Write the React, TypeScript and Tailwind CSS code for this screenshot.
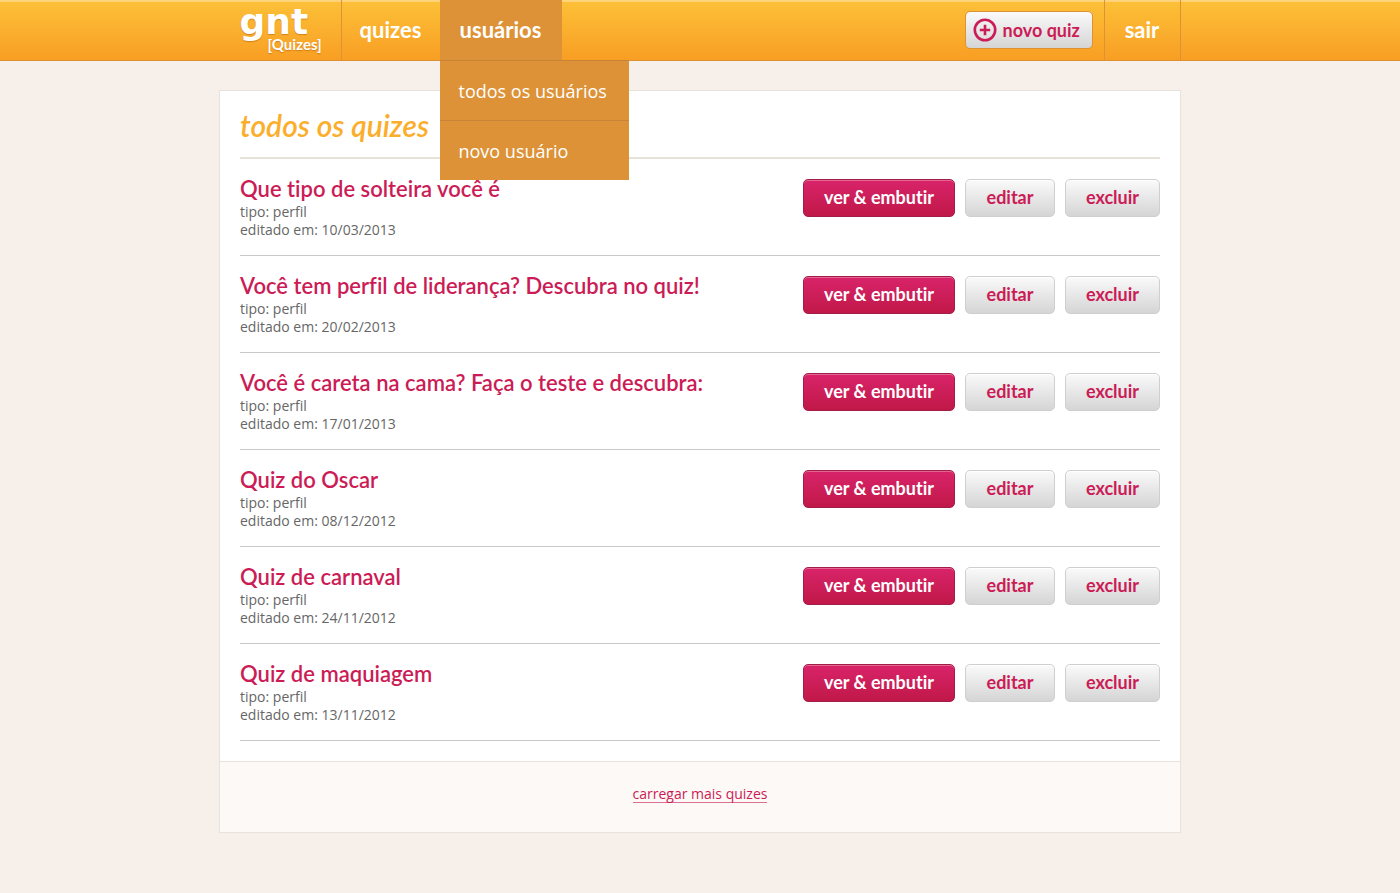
import React from "react";

type Quiz = { title: string; kind: string; edited: string };

const quizzes: Quiz[] = [
  { title: "Que tipo de solteira você é", kind: "perfil", edited: "10/03/2013" },
  { title: "Você tem perfil de liderança? Descubra no quiz!", kind: "perfil", edited: "20/02/2013" },
  { title: "Você é careta na cama? Faça o teste e descubra:", kind: "perfil", edited: "17/01/2013" },
  { title: "Quiz do Oscar", kind: "perfil", edited: "08/12/2012" },
  { title: "Quiz de carnaval", kind: "perfil", edited: "24/11/2012" },
  { title: "Quiz de maquiagem", kind: "perfil", edited: "13/11/2012" },
];

const greyButton =
  "flex h-[38px] items-center justify-center rounded-[5px] border border-[#cfcfcf] bg-linear-to-b from-[#fafafa] to-[#d5d5d5] pb-0.5 text-[18px] font-bold text-[#cb1c56] shadow-[inset_0_1px_0_#fff]";

function Logo() {
  return (
    <a
      href="#inicio"
      className="flex h-[60px] w-[101px] flex-col text-white [text-shadow:0_1px_1px_rgba(160,80,0,0.45)]"
    >
      <span className="pt-2 font-['DejaVu_Sans',sans-serif] text-[36px] leading-7 font-bold">gnt</span>
      <span className="pl-7 text-[15px] leading-4 font-bold">[Quizes]</span>
    </a>
  );
}

function PlusIcon() {
  return (
    <svg className="size-6" viewBox="0 0 24 24" fill="none" stroke="#cb1c56" aria-hidden="true">
      <circle cx="12" cy="12" r="10.2" strokeWidth="2.6" />
      <path d="M12 6.8v10.4M6.8 12h10.4" strokeWidth="2.6" />
    </svg>
  );
}

function Header() {
  return (
    <header className="border-b border-[#dd9237] bg-linear-to-b from-[#fcc138] to-[#f89e23] shadow-[inset_0_2px_0_#ffd37a]">
      <div className="mx-auto flex h-[60px] max-w-[961px] border-r border-[#dd9237] pl-5">
        <Logo />
        <nav className="flex text-[22px] font-bold text-white">
          <a href="#quizes" className="flex w-[99px] items-center justify-center border-l border-[#dd9237] pb-0.5">
            quizes
          </a>
          <div className="relative w-[122px]">
            <a href="#usuarios" className="flex h-full items-center justify-center bg-[#dd9237] pb-0.5">
              usuários
            </a>
            <ul className="absolute top-full left-0 z-10 w-[189px] font-['Open_Sans',sans-serif] text-[18px] font-normal">
              <li className="border-t border-[#c78336] bg-[#dd9237]">
                <a href="#todos-usuarios" className="flex h-[59px] items-center px-[19px] pt-0.5 whitespace-nowrap">
                  todos os usuários
                </a>
              </li>
              <li className="border-t border-[#c78336] bg-[#dd9237]">
                <a href="#novo-usuario" className="flex h-[59px] items-center px-[19px] pt-0.5 whitespace-nowrap">
                  novo usuário
                </a>
              </li>
            </ul>
          </div>
        </nav>
        <div className="ml-auto flex items-center">
          <button
            type="button"
            className="mr-[11px] flex h-[38px] w-32 items-center gap-1.5 rounded-[5px] border border-[#dd9237] bg-linear-to-b from-[#fafafa] to-[#d5d5d5] pl-[7px] text-[18px] font-bold whitespace-nowrap text-[#cb1c56]"
          >
            <PlusIcon />
            novo quiz
          </button>
          <a
            href="#sair"
            className="flex h-full w-[76px] items-center justify-center border-l border-[#dd9237] pb-0.5 text-[22px] font-bold text-white"
          >
            sair
          </a>
        </div>
      </div>
    </header>
  );
}

function QuizRow({ quiz }: { quiz: Quiz }) {
  return (
    <li className="flex items-start justify-between gap-4 border-b border-[#c9c9c9] pt-4 pb-4">
      <div>
        <h2 className="text-[22px] leading-7 font-semibold text-[#cb1c56]">{quiz.title}</h2>
        <p className="font-['Open_Sans',sans-serif] text-[14px] leading-[18px] text-[#666]">
          tipo: {quiz.kind}
          <br />
          editado em: {quiz.edited}
        </p>
      </div>
      <div className="flex shrink-0 gap-2.5 pt-1">
        <button
          type="button"
          className="flex h-[38px] w-[152px] items-center justify-center rounded-[5px] border border-[#a31d49] bg-linear-to-b from-[#d9236a] to-[#c01848] pb-0.5 text-[18px] font-bold text-white shadow-[inset_0_1px_0_#e2668f]"
        >
          ver &amp; embutir
        </button>
        <button type="button" className={`${greyButton} w-[90px]`}>
          editar
        </button>
        <button type="button" className={`${greyButton} w-[95px]`}>
          excluir
        </button>
      </div>
    </li>
  );
}

export default function App() {
  return (
    <div className="min-h-screen bg-[#f7f0ea] pb-[60px] font-['Lato',sans-serif] [font-variant-ligatures:none]">
      <Header />
      <main className="mx-auto mt-[29px] max-w-[962px] border border-[#e6e2dc] bg-white">
        <div className="px-5 pb-5">
          <h1 className="border-b-2 border-[#e6e2d8] pt-[14px] pb-3 text-[30px] leading-10 font-semibold text-[#fbae2c] italic">
            todos os quizes
          </h1>
          <ul>
            {quizzes.map((quiz) => (
              <QuizRow key={quiz.title} quiz={quiz} />
            ))}
          </ul>
        </div>
        <div className="flex h-[71px] justify-center border-t border-[#e6e2dc] bg-[#fcf9f6] pt-[22px]">
          <a
            href="#mais"
            className="h-[19px] border-b border-[#dc6f95] font-['Open_Sans',sans-serif] text-[14px] leading-[20px] text-[#cb1c56]"
          >
            carregar mais quizes
          </a>
        </div>
      </main>
    </div>
  );
}
